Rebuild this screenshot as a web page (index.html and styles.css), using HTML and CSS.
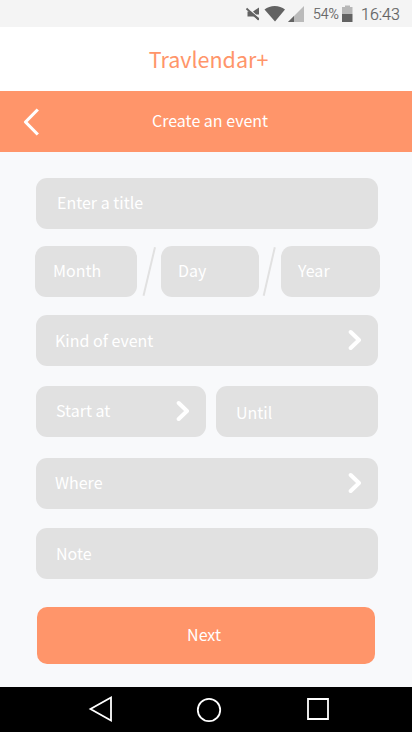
FILE: index.html
```html
<!DOCTYPE html>
<html lang="en">
<head>
<meta charset="utf-8">
<meta name="viewport" content="width=device-width, initial-scale=1">
<title>Travlendar+</title>
<link rel="stylesheet" href="styles.css">
</head>
<body>
<div class="statusbar">
  <svg class="status-icons" width="60" height="27" viewBox="0 0 60 27">
    <path fill="#626262" d="M2.500 11.500H6l8 6.500V20.500l-5-4H2.500zM8 11.500L14 7.500V14.500h-3z"/>
    <path stroke="#626262" stroke-width="1.800" d="M1.500 8.500l12 11"/>
    <path fill="#626262" d="M19.500 9.500C25 4.700 34.500 4.700 40 9.500L30 21.500z"/>
    <path fill="#bababa" d="M59 6v16H43z"/>
    <path fill="#626262" d="M49 16v6h-6z"/>
  </svg>
  <span class="percent">54%</span>
  <svg class="battery" width="11" height="27" viewBox="0 0 11 27">
    <path fill="#b7b7b7" d="M3 5.500h5V7h2.500v7H0V7h3z"/>
    <path fill="#626262" d="M0 14h10.500v8H0z"/>
  </svg>
  <span class="clock">16:43</span>
</div>
<header class="brand"><span>Travlendar+</span></header>
<div class="toolbar">
  <svg class="back" width="20" height="30" viewBox="0 0 20 30"><path d="M15.800 2.500L3.500 15l12.300 12.500"/></svg>
  <h1>Create an event</h1>
</div>
<main class="form">
  <div class="field title"><span>Enter a title</span></div>
  <div class="date">
    <div class="field"><span>Month</span></div>
    <svg class="slash" width="24" height="51" viewBox="0 0 24 51"><path d="M18 1.200L6.500 49.800"/></svg>
    <div class="field"><span>Day</span></div>
    <svg class="slash" width="23" height="51" viewBox="0 0 23 51"><path d="M15.800 1.200L4.700 49.800"/></svg>
    <div class="field"><span>Year</span></div>
  </div>
  <div class="field kind"><span>Kind of event</span><svg class="next-icon" width="14" height="22" viewBox="0 0 14 22"><path d="M2.700 3L11 11l-8.300 8"/></svg></div>
  <div class="times">
    <div class="field start"><span>Start at</span><svg class="next-icon" width="14" height="22" viewBox="0 0 14 22"><path d="M2.700 3L11 11l-8.300 8"/></svg></div>
    <div class="field until"><span>Until</span></div>
  </div>
  <div class="field where"><span>Where</span><svg class="next-icon" width="14" height="22" viewBox="0 0 14 22"><path d="M2.700 3L11 11l-8.300 8"/></svg></div>
  <div class="field note"><span>Note</span></div>
  <button class="submit" type="button">Next</button>
</main>
<nav class="navbar">
  <svg width="412" height="45" viewBox="0 0 412 45">
    <path d="M111 10.500v23L90.500 22z"/>
    <circle cx="209" cy="23" r="11.200"/>
    <path d="M308 12h20v20h-20z"/>
  </svg>
</nav>
</body>
</html>
```

FILE: styles.css
```css
* { box-sizing: border-box; }
body {
  margin: 0;
  width: 412px;
  height: 732px;
  overflow: hidden;
  display: flex;
  flex-direction: column;
  background: #f8f9fb;
  color: #fff;
  font: 16px/24px "Noto Sans CJK SC", "Noto Sans", sans-serif;
}
svg { display: block; flex: none; fill: none; }
.statusbar {
  height: 27px;
  flex: none;
  display: flex;
  align-items: center;
  padding-left: 245px;
  background: #f4f4f4;
  color: #626262;
  font-family: Roboto, sans-serif;
  white-space: nowrap;
}
.percent { width: 29px; margin-left: 8px; font-size: 14px; font-weight: 300; padding-top: 1px; -webkit-text-stroke: 0.200px; }
.clock { margin-left: 8px; font-size: 16px; font-weight: 300; padding-top: 2px; -webkit-text-stroke: 0.200px; }
.brand {
  height: 64px;
  flex: none;
  display: flex;
  align-items: center;
  justify-content: center;
  padding-left: 5px;
  background: #fff;
  color: #ff956a;
  font-size: 21.500px;
}
.toolbar {
  height: 61px;
  flex: none;
  display: flex;
  align-items: center;
  padding-left: 22px;
  background: #ff956a;
}
.back { stroke: #fff; stroke-width: 3.200; stroke-linejoin: round; stroke-linecap: butt; }
h1 { margin: 0 0 0 110px; padding-bottom: 3px; font-size: 16px; font-weight: 400; }
.form { flex: 1; padding: 26px 34px 0 36px; }
.field {
  height: 51px;
  border-radius: 11px;
  background: #e1e1e1;
  display: flex;
  align-items: center;
  justify-content: space-between;
  padding: 0 16px 1px 20px;
}
.field span { padding-bottom: 2px; }
.title { padding-left: 21px; }
.date {
  display: grid;
  grid-template-columns: 102px 24px 97.500px 22.500px 98.500px;
  margin: 17px -2px 18px -1px;
}
.date .field { padding: 0 0 1px 17px; }
.date .field:first-child { padding-left: 18px; }
.slash { stroke: #e1e1e1; stroke-width: 2; }
.kind, .where { padding-left: 19px; }
.kind span { padding-bottom: 0; }
.next-icon { stroke: #fff; stroke-width: 4; stroke-linecap: round; stroke-linejoin: round; }
.times { display: grid; grid-template-columns: 170px 162px; gap: 10px; margin: 20px 0 21px; }
.until { padding-top: 3px; }
.note { margin-top: 19px; padding-top: 1px; }
.submit {
  display: block;
  width: 338px;
  height: 57px;
  margin: 28px 0 0 1px;
  padding: 0 4px 3px 0;
  border: 0;
  border-radius: 10px;
  background: #ff956a;
  color: #fff;
  font: inherit;
}
.navbar { height: 45px; flex: none; background: #000; }
.navbar svg { stroke: #fff; stroke-width: 1.800; }
```
